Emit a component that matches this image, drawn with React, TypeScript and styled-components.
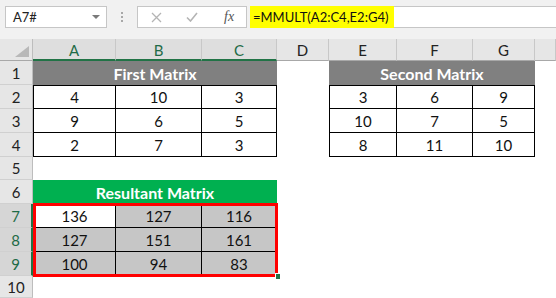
import React from "react";
import styled, { createGlobalStyle } from "styled-components";

const Global = createGlobalStyle`
  html, body { margin: 0; padding: 0; background: #ffffff; overflow: hidden; }
  body { font-family: "Lato", "Open Sans", sans-serif; }
`;

const Page = styled.div`
  width: 556px;
  height: 298px;
  display: flex;
  flex-direction: column;
  background: #ffffff;
`;

const TopBar = styled.div`
  height: 39px;
  background: #f1f1f1;
  display: flex;
  align-items: flex-start;
  padding-top: 6px;
  box-sizing: border-box;
`;

const NameBox = styled.div`
  margin-left: 5px;
  width: 102px;
  height: 22px;
  box-sizing: border-box;
  background: #fff;
  border: 1px solid #c6c6c6;
  display: flex;
  align-items: center;
  justify-content: space-between;
  padding: 0 6px 0 7px;
  font-size: 13px;
  color: #222;
`;

const Caret = styled.span`
  width: 0;
  height: 0;
  border-left: 4px solid transparent;
  border-right: 4px solid transparent;
  border-top: 4px solid #7a7a7a;
`;

const Dots = styled.div`
  width: 30px;
  height: 22px;
  display: flex;
  flex-direction: column;
  align-items: center;
  justify-content: center;
  gap: 2px;
  & > span {
    width: 2px;
    height: 2px;
    background: #a8a8a8;
  }
`;

const Buttons = styled.div`
  width: 110px;
  height: 22px;
  box-sizing: border-box;
  background: #fff;
  border: 1px solid #c6c6c6;
  display: flex;
  align-items: center;
  padding-left: 13px;
  gap: 24px;
`;

const Fx = styled.span`
  font-family: "Liberation Serif", serif;
  font-style: italic;
  font-size: 14px;
  color: #555;
  margin-left: 2px;
`;

const FormulaInput = styled.div`
  flex: 1;
  margin-left: 3px;
  height: 22px;
  box-sizing: border-box;
  background: #fff;
  border-top: 1px solid #c6c6c6;
  border-bottom: 1px solid #c6c6c6;
  display: flex;
`;

const Highlight = styled.span`
  width: 144px;
  background: #ffff00;
  display: flex;
  align-items: center;
  padding-left: 3px;
  box-sizing: border-box;
  font-size: 13px;
  color: #111;
  margin-top: -1px;
  height: 22px;
`;

const Sheet = styled.div`
  flex: 1;
  display: grid;
  grid-template-columns: 33px 83px 86px 75px 52px 68px 76px 62px 1fr;
  grid-template-rows: 22px 24px 24px 24px 24px 23px 24px 24px 24px 24px 1fr;
  font-size: 15px;
`;

const Corner = styled.div`
  background: #e6e6e6;
  border-right: 1px solid #bdbdbd;
  border-bottom: 1px solid #a8a8a8;
  box-sizing: border-box;
  display: flex;
  align-items: flex-end;
  justify-content: flex-end;
  padding: 0 3px 3px 0;
`;

const CornerTri = styled.span`
  width: 0;
  height: 0;
  border-left: 14px solid transparent;
  border-bottom: 11px solid #b8b8b8;
`;

const ColHead = styled.div<{ $sel?: boolean }>`
  background: ${(p) => (p.$sel ? "#dedede" : "#e6e6e6")};
  color: ${(p) => (p.$sel ? "#1e6b47" : "#222")};
  border-right: 1px solid #c8c8c8;
  border-bottom: ${(p) => (p.$sel ? "2px solid #217346" : "1px solid #a8a8a8")};
  box-sizing: border-box;
  display: flex;
  align-items: center;
  justify-content: center;
  padding-top: 1px;
`;

const RowHead = styled.div<{ $sel?: boolean }>`
  background: ${(p) => (p.$sel ? "#d6d6d6" : "#e6e6e6")};
  color: ${(p) => (p.$sel ? "#1e6b47" : "#222")};
  border-right: ${(p) => (p.$sel ? "2px solid #217346" : "1px solid #bdbdbd")};
  border-bottom: 1px solid #d0d0d0;
  box-sizing: border-box;
  display: flex;
  align-items: center;
  justify-content: center;
  grid-column: 1;
`;

const Cell = styled.div<{ $bg?: string; $top?: boolean; $left?: boolean; $line?: boolean }>`
  background: ${(p) => p.$bg || "#fff"};
  box-sizing: border-box;
  border-right: ${(p) => (p.$line ? "1px solid #000" : "none")};
  border-bottom: ${(p) => (p.$line ? "1px solid #000" : "none")};
  border-top: ${(p) => (p.$top ? "1px solid #000" : "none")};
  border-left: ${(p) => (p.$left ? "1px solid #000" : "none")};
  display: flex;
  align-items: center;
  justify-content: center;
  color: #111;
`;

const Title = styled.div<{ $bg: string; $col: string }>`
  grid-column: ${(p) => p.$col};
  background: ${(p) => p.$bg};
  color: #fff;
  font-weight: 700;
  font-size: 16px;
  display: flex;
  align-items: center;
  justify-content: center;
`;

const Selection = styled.div`
  grid-row: 8 / 11;
  grid-column: 2 / 5;
  border: 3px solid #ff0000;
  margin: -1px -1px -1px 0;
  z-index: 2;
  position: relative;
  pointer-events: none;
`;

const FillHandle = styled.span`
  position: absolute;
  right: -5px;
  bottom: -5px;
  width: 4px;
  height: 5px;
  background: #217346;
  border-left: 1px solid #fff;
  border-top: 1px solid #fff;
`;

const first = [
  [4, 10, 3],
  [9, 6, 5],
  [2, 7, 3],
];
const second = [
  [3, 6, 9],
  [10, 7, 5],
  [8, 11, 10],
];
const result = [
  [136, 127, 116],
  [127, 151, 161],
  [100, 94, 83],
];

const cols = ["A", "B", "C", "D", "E", "F", "G", ""];

export default function App() {
  const rows: React.ReactNode[] = [];
  for (let r = 1; r <= 10; r++) {
    rows.push(
      <RowHead key={`rh${r}`} $sel={r >= 7 && r <= 9} style={{ gridRow: r + 1 }}>
        {r}
      </RowHead>
    );
  }

  const cells: React.ReactNode[] = [];
  cells.push(
    <Title key="t1" $bg="#808080" $col="2 / 5" style={{ gridRow: 2 }}>
      First Matrix
    </Title>
  );
  cells.push(<Cell key="d1" style={{ gridRow: 2 }} />);
  cells.push(
    <Title key="t2" $bg="#808080" $col="6 / 9" style={{ gridRow: 2 }}>
      Second Matrix
    </Title>
  );
  cells.push(<Cell key="h1" style={{ gridRow: 2 }} />);

  for (let i = 0; i < 3; i++) {
    first[i].forEach((v, j) =>
      cells.push(
        <Cell key={`f${i}${j}`} $line $top={i === 0} $left={j === 0} style={{ gridRow: i + 3 }}>
          {v}
        </Cell>
      )
    );
    cells.push(<Cell key={`fd${i}`} style={{ gridRow: i + 3 }} />);
    second[i].forEach((v, j) =>
      cells.push(
        <Cell key={`s${i}${j}`} $line $top={i === 0} $left={j === 0} style={{ gridRow: i + 3 }}>
          {v}
        </Cell>
      )
    );
    cells.push(<Cell key={`sh${i}`} style={{ gridRow: i + 3 }} />);
  }

  cells.push(
    <Title key="t3" $bg="#00b050" $col="2 / 5" style={{ gridRow: 7 }}>
      Resultant Matrix
    </Title>
  );

  for (let i = 0; i < 3; i++) {
    result[i].forEach((v, j) =>
      cells.push(
        <Cell
          key={`r${i}${j}`}
          $line
          $left={j === 0}
          $bg={i === 0 && j === 0 ? "#ffffff" : "#c6c6c6"}
          style={{ gridRow: i + 8, gridColumn: j + 2 }}
        >
          {v}
        </Cell>
      )
    );
  }

  return (
    <>
      <Global />
      <Page>
        <TopBar>
          <NameBox>
            <span>A7#</span>
            <Caret />
          </NameBox>
          <Dots>
            <span />
            <span />
            <span />
          </Dots>
          <Buttons>
            <svg width="11" height="11" viewBox="0 0 11 11">
              <path d="M1 1 L10 10 M10 1 L1 10" stroke="#b4b4b4" strokeWidth="1.3" fill="none" />
            </svg>
            <svg width="12" height="10" viewBox="0 0 12 10">
              <path d="M1 5.5 L4.5 9 L11 1" stroke="#b4b4b4" strokeWidth="1.6" fill="none" />
            </svg>
            <Fx>fx</Fx>
          </Buttons>
          <FormulaInput>
            <Highlight>=MMULT(A2:C4,E2:G4)</Highlight>
          </FormulaInput>
        </TopBar>
        <Sheet>
          <Corner>
            <CornerTri />
          </Corner>
          {cols.map((c, i) => (
            <ColHead key={`c${i}`} $sel={i < 3}>
              {c}
            </ColHead>
          ))}
          {rows}
          {cells}
          <Selection>
            <FillHandle />
          </Selection>
        </Sheet>
      </Page>
    </>
  );
}
